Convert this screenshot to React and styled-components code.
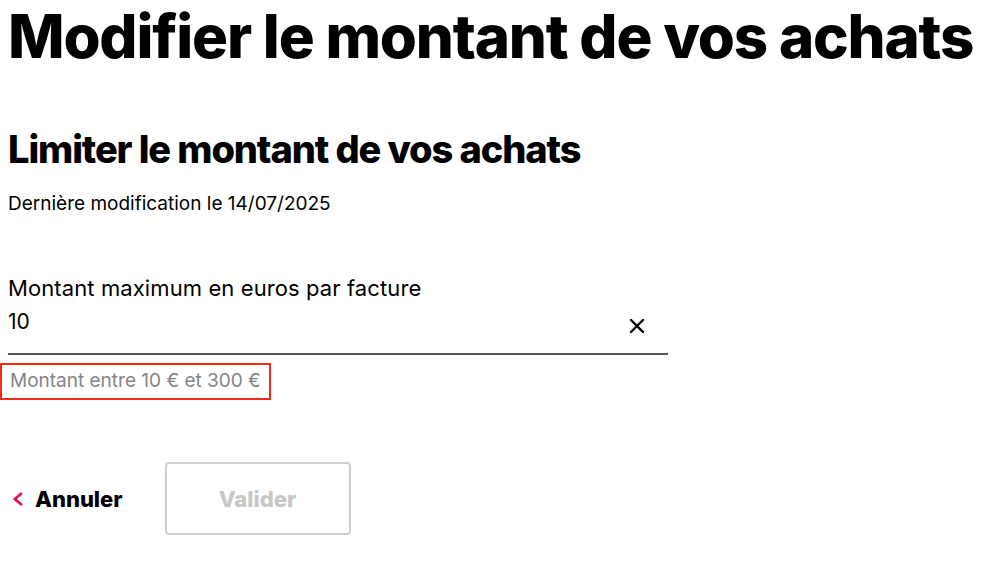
import React from 'react'
import styled, { createGlobalStyle } from 'styled-components'

const GlobalStyle = createGlobalStyle`
    body {
        margin: 0;
        background: #fff;
        font-family: Inter, "Liberation Sans", sans-serif;
        color: #000;
    }
`

const Page = styled.div`
    padding: 0 8px;
    display: flex;
    flex-direction: column;
`

const Title = styled.h1`
    margin: 0;
    font-size: 60px;
    font-weight: 800;
    letter-spacing: -1.2px;
    line-height: 72px;
    white-space: nowrap;
`

const SubTitle = styled.h2`
    margin: 54px 0 0;
    font-size: 38px;
    font-weight: 800;
    letter-spacing: -1.1px;
    line-height: 46px;
`

const Updated = styled.p`
    margin: 20px 0 0;
    font-size: 19px;
    line-height: 24px;
`

const Field = styled.div`
    margin-top: 59px;
    width: 660px;
    display: flex;
    flex-direction: column;
`

const Label = styled.label`
    font-size: 22px;
    letter-spacing: 0.1px;
    line-height: 26px;
`

const InputRow = styled.div`
    display: flex;
    align-items: center;
    justify-content: space-between;
    height: 50px;
    border-bottom: 2px solid #555;
    padding-bottom: 2px;
`

const Value = styled.span`
    font-size: 21px;
    align-self: flex-start;
    padding-top: 8px;
`

const ClearButton = styled.button`
    border: 0;
    background: none;
    padding: 0;
    margin-right: 22px;
    width: 18px;
    height: 18px;
    display: flex;
    align-items: center;
    justify-content: center;
    cursor: pointer;
`

const Helper = styled.div`
    margin: 8px 0 0 -8px;
    align-self: flex-start;
    padding: 4px 8px 5px;
    border: 2px solid #f42a12;
    color: #858585;
    font-size: 19px;
    line-height: 24px;
`

const Actions = styled.div`
    margin-top: 62px;
    display: flex;
    align-items: center;
    gap: 42px;
`

const BackLink = styled.a`
    display: flex;
    align-items: center;
    gap: 12px;
    padding-left: 4px;
    font-size: 22px;
    font-weight: 800;
    color: #000;
    text-decoration: none;
    cursor: pointer;
`

const SubmitButton = styled.button`
    width: 186px;
    height: 73px;
    border: 2px solid #d0d0d0;
    border-radius: 4px;
    background: #fff;
    color: #c8c8c8;
    font-family: inherit;
    font-size: 22px;
    font-weight: 800;
`

export default function App() {
    return (
        <>
            <GlobalStyle />
            <Page>
                <Title>Modifier le montant de vos achats</Title>
                <SubTitle>Limiter le montant de vos achats</SubTitle>
                <Updated>Dernière modification le 14/07/2025</Updated>
                <Field>
                    <Label>Montant maximum en euros par facture</Label>
                    <InputRow>
                        <Value>10</Value>
                        <ClearButton aria-label="Effacer">
                            <svg width="16" height="16" viewBox="0 0 16 16">
                                <path d="M2 2 L14 14 M14 2 L2 14" stroke="#000" strokeWidth="2.4" strokeLinecap="round" />
                            </svg>
                        </ClearButton>
                    </InputRow>
                    <Helper>Montant entre 10 € et 300 €</Helper>
                </Field>
                <Actions>
                    <BackLink>
                        <svg width="11" height="14" viewBox="0 0 11 14">
                            <path d="M9 1.8 L2.8 7 L9 12.2" stroke="#e5124f" strokeWidth="2.8" fill="none" strokeLinecap="round" strokeLinejoin="round" />
                        </svg>
                        Annuler
                    </BackLink>
                    <SubmitButton disabled>Valider</SubmitButton>
                </Actions>
            </Page>
        </>
    )
}
